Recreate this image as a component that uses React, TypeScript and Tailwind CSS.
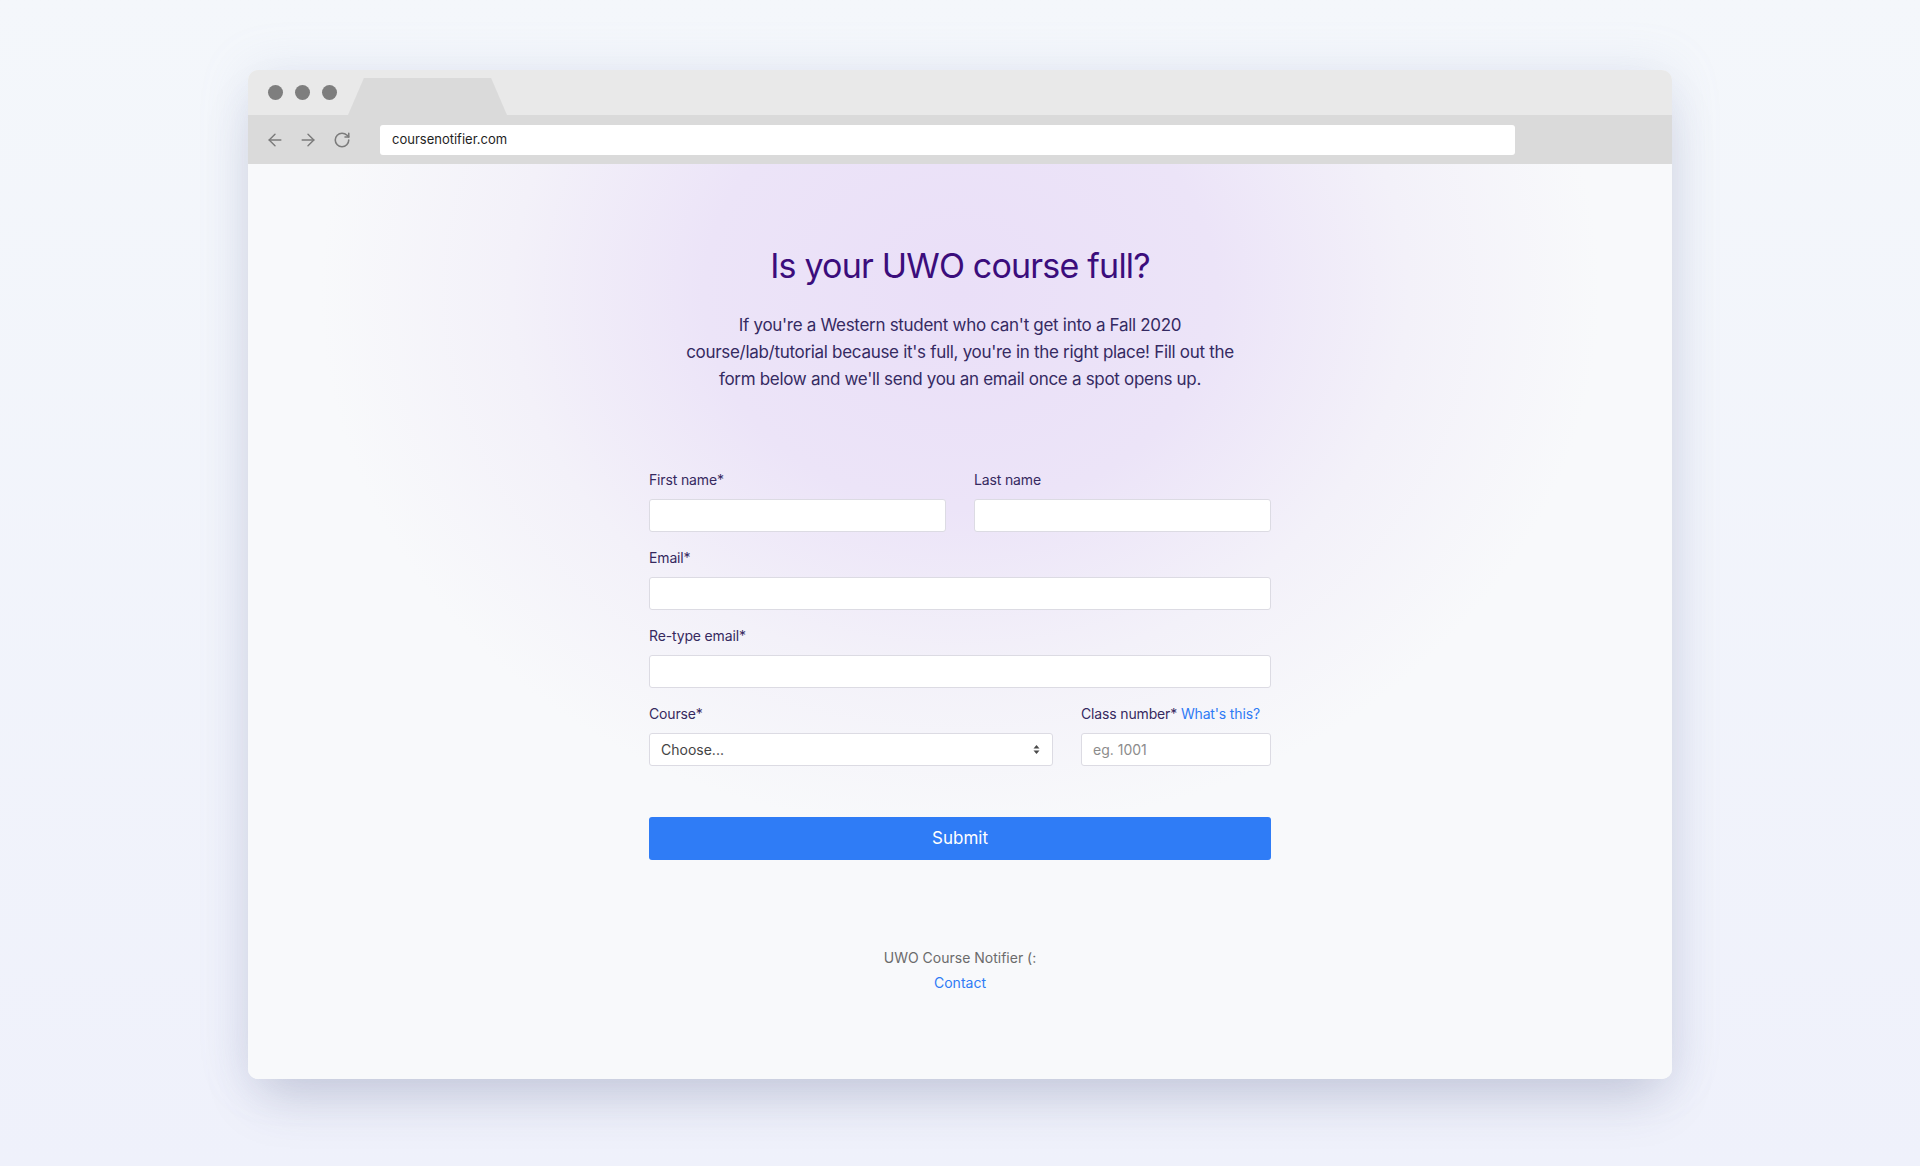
import { ArrowLeft, ArrowRight, RotateCw } from 'lucide-react';

const Label = ({ children }: { children: React.ReactNode }) => (
  <label className="block text-[14px] leading-[20px] mb-[9px] tracking-[-0.15px] text-[#36295f]">{children}</label>
);

const Input = ({ placeholder }: { placeholder?: string }) => (
  <input
    type="text"
    placeholder={placeholder}
    className="block w-full h-[33px] rounded-[3px] border border-[#dcdbe3] bg-white px-[11px] text-[14px] text-[#333] placeholder:text-[#8c8c8c] outline-none"
  />
);

const BrowserChrome = () => (
  <>
    <div className="h-[45px] bg-[#e9e9e9] flex items-center">
      <div className="flex items-center gap-[12px] ml-[20px]">
        <span className="w-[15px] h-[15px] rounded-full bg-[#7e7e7e]" />
        <span className="w-[15px] h-[15px] rounded-full bg-[#7e7e7e]" />
        <span className="w-[15px] h-[15px] rounded-full bg-[#7e7e7e]" />
      </div>
      <div className="self-end ml-[11px] w-[159px] h-[37px] bg-[#dadada] [clip-path:polygon(10%_0,90%_0,100%_100%,0_100%)]" />
    </div>
    <div className="h-[49px] bg-[#dadada] flex items-center">
      <div className="flex items-center text-[#7b7b7b] ml-[17px] gap-[13px]">
        <ArrowLeft size={20} strokeWidth={1.7} />
        <ArrowRight size={20} strokeWidth={1.7} />
        <RotateCw size={18} strokeWidth={2.1} className="ml-[2px]" />
      </div>
      <div className="ml-[29px] w-[1135px] h-[30px] bg-white rounded-[3px] flex items-center pl-[12px] text-[13px] text-[#1e1e1e]">
        coursenotifier.com
      </div>
    </div>
  </>
);

export default function App() {
  return (
    <div className="w-full h-[1166px] bg-gradient-to-b from-[#f4f7fb] to-[#eff1fb] pt-[70px] font-['Inter','Liberation_Sans',sans-serif]">
      <div className="mx-auto w-[1424px] h-[1009px] rounded-[10px] overflow-hidden flex flex-col bg-[#f8f9fb] shadow-[0_28px_50px_-12px_rgba(60,70,110,0.22),0_0_50px_rgba(160,170,210,0.18)]">
        <BrowserChrome />
        <div className="flex-1 flex flex-col items-center bg-[radial-gradient(ellipse_640px_540px_at_50%_14%,#eadff8_0%,#ece4f8_40%,#f3f1f9_70%,#f8f9fb_100%)]">
          <h1 className="pt-[80px] text-[34px] leading-[44px] text-[#3b0d7c] tracking-[-0.8px]">
            Is your UWO course full?
          </h1>
          <p className="mt-[24px] w-[600px] text-center text-[17px] leading-[27px] tracking-[-0.3px] text-[#352a62]">
            If you're a Western student who can't get into a Fall 2020
            <br />
            course/lab/tutorial because it's full, you're in the right place! Fill out the
            <br />
            form below and we'll send you an email once a spot opens up.
          </p>

          <form className="mt-[77px] w-[622px] flex flex-col gap-[16px]" onSubmit={(e) => e.preventDefault()}>
            <div className="grid grid-cols-2 gap-x-[28px]">
              <div>
                <Label>First name*</Label>
                <Input />
              </div>
              <div>
                <Label>Last name</Label>
                <Input />
              </div>
            </div>
            <div>
              <Label>Email*</Label>
              <Input />
            </div>
            <div>
              <Label>Re-type email*</Label>
              <Input />
            </div>
            <div className="grid grid-cols-[404px_1fr] gap-x-[28px]">
              <div>
                <Label>Course*</Label>
                <div className="h-[33px] rounded-[3px] border border-[#dcdbe3] bg-white px-[11px] flex items-center justify-between text-[14px] text-[#444]">
                  <span>Choose...</span>
                  <svg width="7" height="11" viewBox="0 0 7 11" className="mr-[1px]">
                    <path d="M3.5 1 L6.5 4.5 H0.5 Z" fill="#4a4a4a" />
                    <path d="M3.5 10 L6.5 6.5 H0.5 Z" fill="#4a4a4a" />
                  </svg>
                </div>
              </div>
              <div>
                <Label>
                  Class number* <span className="text-[#2f7bf5]">What's this?</span>
                </Label>
                <Input placeholder="eg. 1001" />
              </div>
            </div>
            <button
              type="submit"
              className="mt-[35px] h-[43px] w-full rounded-[3px] bg-[#2f7cf6] text-white text-[17px]"
            >
              Submit
            </button>
          </form>

          <div className="mt-[85px] flex flex-col items-center text-[14px] leading-[25px]">
            <span className="text-[#6b6b6b]">UWO Course Notifier (:</span>
            <span className="text-[#2f7bf5]">Contact</span>
          </div>
        </div>
      </div>
    </div>
  );
}
